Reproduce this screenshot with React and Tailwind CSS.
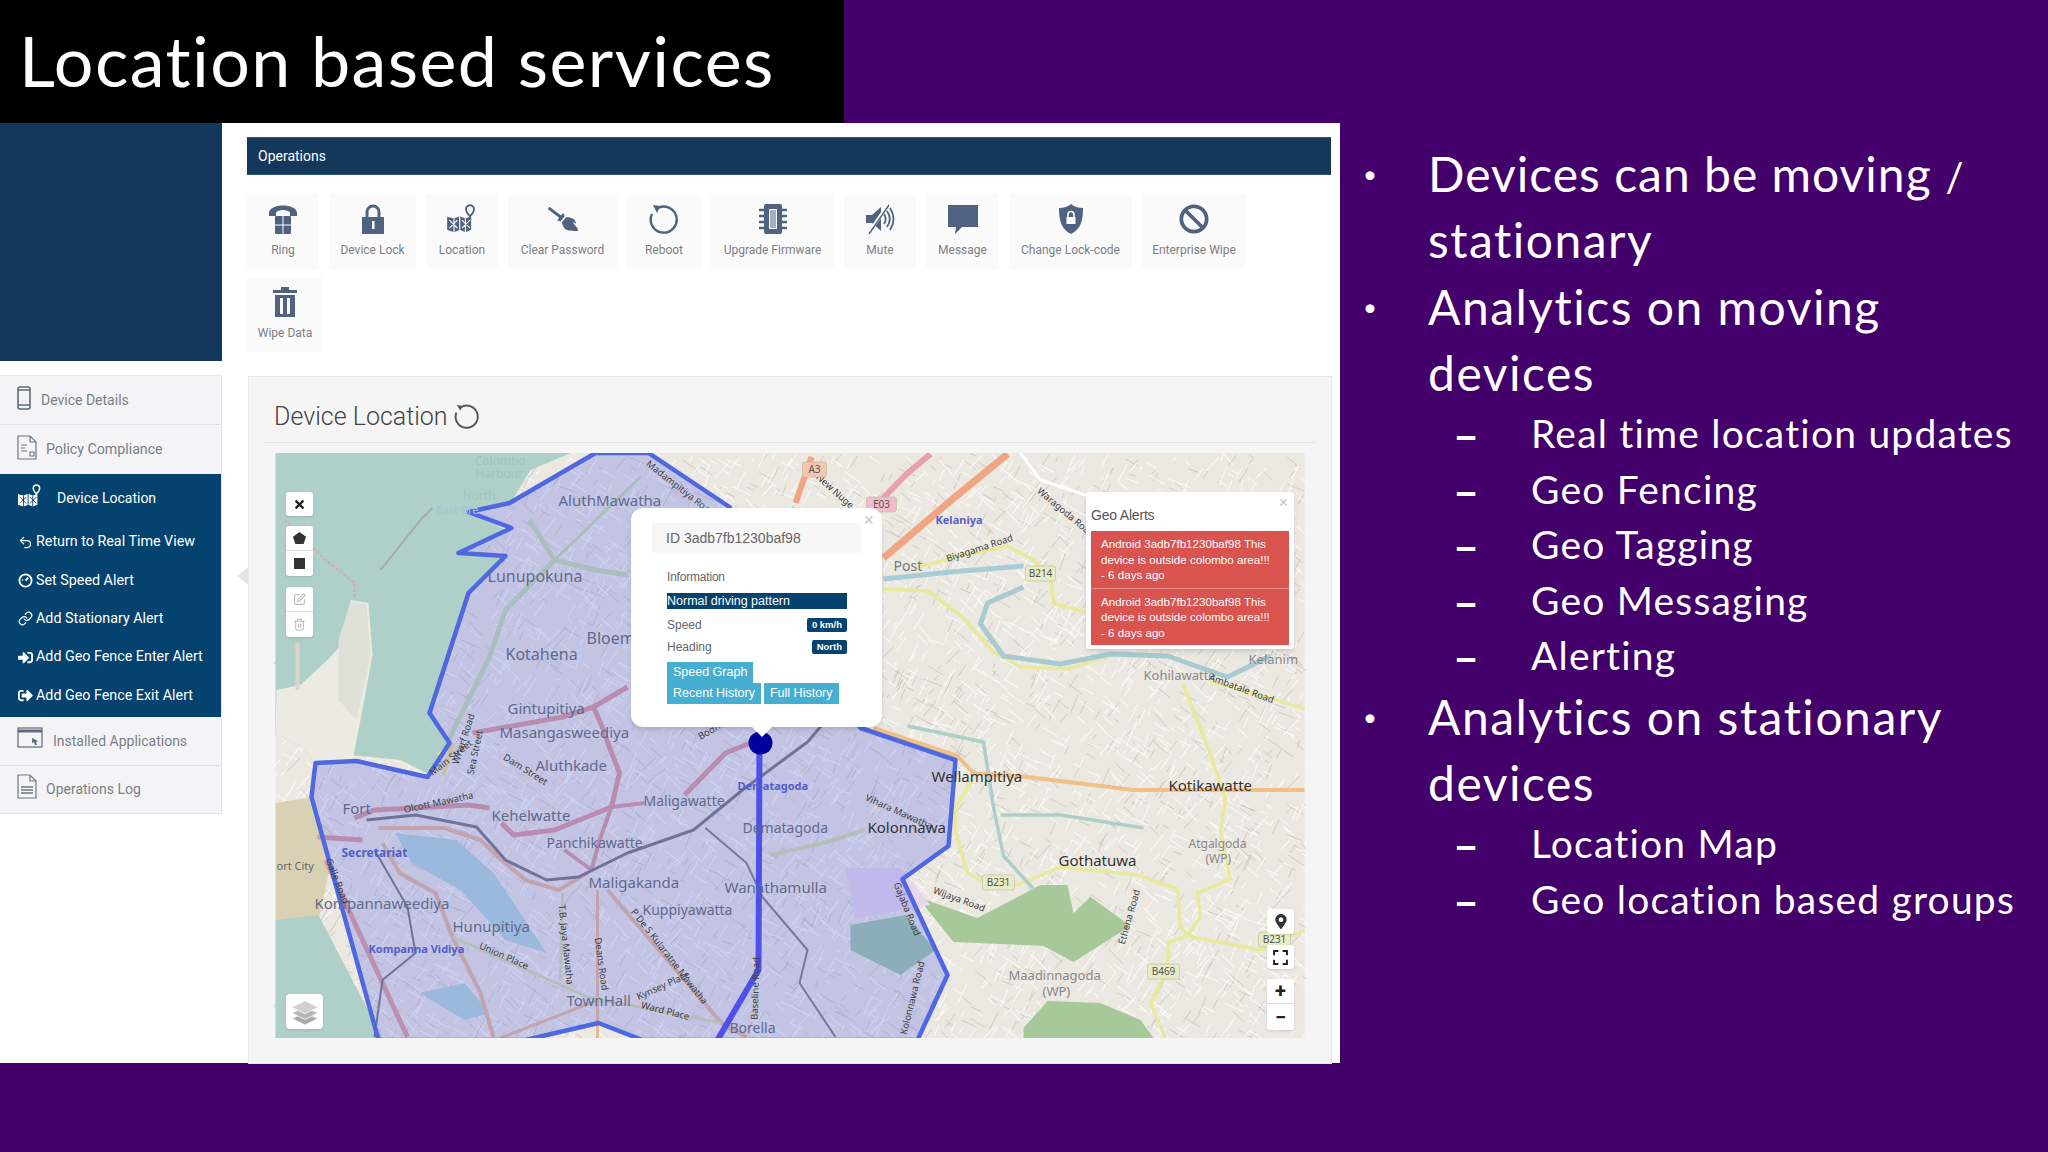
import { Undo2, Link, SquarePen, Trash2 } from "lucide-react";
import { FaBan, FaBroom, FaMapMarkerAlt, FaTimes, FaSignInAlt, FaSignOutAlt } from "react-icons/fa";

const SpeedIcon = ({ className }) => (
   <svg viewBox="0 0 16 16" className={className} fill="none" stroke="currentColor" strokeWidth="2">
      <circle cx="8" cy="8" r="6.500" />
      <path d="M4.500 7.500h1M8 8l3-3" />
   </svg>
);

const MapPin = ({ className, cut = "#fff" }) => (
   <svg viewBox="0 0 28 26" className={className} fill="currentColor">
      <path d="M1 11l6 1.500 5-2 5 2 5-2v12l-5 2-5-2-5 2-6-2z" />
      <path d="M7 12.500v12M12 10.500v12M17 12.500v12M3 14l7 7M10 14l-7 7M14 14l7 7M21 14l-7 7" stroke={cut} strokeWidth="1" fill="none" />
      <path d="M21 1a3.500 3.500 0 013.500 3.500c0 2.500-3.500 6-3.500 6s-3.500-3.500-3.500-6A3.500 3.500 0 0121 1z" fill="none" stroke="currentColor" strokeWidth="1.600" />
   </svg>
);

const opIcons = {
   ring: (
      <svg viewBox="0 0 32 32" className="w-[32px] h-[32px]" fill="currentColor">
         <path d="M2 10C2 0 30 0 30 10v3h-7V9.500C21 6 11 6 9 9.500V13H2z" />
         <rect x="8" y="13" width="16" height="18" rx="1" />
         <path d="M16 13v18M8 22h16" stroke="#fff" strokeWidth="1" />
      </svg>
   ),
   lock: (
      <svg viewBox="0 0 26 32" className="w-[26px] h-[32px]" fill="currentColor">
         <path d="M7 15V9a6 6 0 0112 0v6" fill="none" stroke="currentColor" strokeWidth="3" />
         <rect x="2" y="14" width="22" height="17" />
         <rect x="12" y="18" width="2.500" height="8" fill="#fff" />
      </svg>
   ),
   location: <MapPin className="w-[32px] h-[30px]" />,
   clear: <FaBroom className="w-[30px] h-[30px] -scale-x-100" />,
   reboot: (
      <svg viewBox="0 0 32 32" className="w-[32px] h-[32px]" fill="none" stroke="currentColor" strokeWidth="2.400">
         <path d="M9 5.500A13 13 0 1 1 4 11" />
         <path d="M5 2l7 1-3 7z" fill="currentColor" stroke="none" />
      </svg>
   ),
   chip: (
      <svg viewBox="0 0 32 32" className="w-[32px] h-[32px]" fill="currentColor">
         <path fillRule="evenodd" d="M9 1h14a2 2 0 012 2v26a2 2 0 01-2 2H9a2 2 0 01-2-2V3a2 2 0 012-2zm3 5v20h8V6z" />
         <rect x="13" y="7" width="6" height="18" opacity=".5" />
         <path d="M2 7h5M2 13h5M2 19h5M2 25h5M25 7h5M25 13h5M25 19h5M25 25h5" stroke="currentColor" strokeWidth="2.500" />
      </svg>
   ),
   mute: (
      <svg viewBox="0 0 32 32" className="w-[32px] h-[32px]" fill="currentColor">
         <path d="M2 12h6l9-8v24l-9-8H2z" />
         <path d="M20 11c2 3 2 7 0 10M23 8c3.500 5 3.500 11 0 16M26 5c4.500 7 4.500 15 0 22" fill="none" stroke="currentColor" strokeWidth="1.800" />
         <path d="M24 2L4 31" stroke="#fff" strokeWidth="3.500" />
         <path d="M25 2L5 31" stroke="currentColor" strokeWidth="1.400" />
      </svg>
   ),
   message: (
      <svg viewBox="0 0 32 32" className="w-[32px] h-[32px]" fill="currentColor">
         <path d="M1 2h30v22H15l-7 7 1-7H1z" />
      </svg>
   ),
   shield: (
      <svg viewBox="0 0 28 32" className="w-[28px] h-[32px]" fill="currentColor">
         <path d="M14 1c3 2.500 7 4 12 4 0 12-2 21-12 26C4 26 2 17 2 5c5 0 9-1.500 12-4z" />
         <path d="M11 14v-2.500a3 3 0 016 0V14" fill="none" stroke="#fff" strokeWidth="1.600" />
         <rect x="9.500" y="14" width="9" height="7" fill="#fff" />
      </svg>
   ),
   ban: <FaBan className="w-[30px] h-[30px]" />,
   trash: (
      <svg viewBox="0 0 28 32" className="w-[28px] h-[32px]" fill="currentColor">
         <path d="M10 1h8v3h8v3H2V4h8z" />
         <path fillRule="evenodd" d="M4 9h20v22H4zm5 3v16h3V12zm7 0v16h3V12z" />
      </svg>
   ),
};

const operations = [
   { icon: "ring", label: "Ring", width: "w-[72px]" },
   { icon: "lock", label: "Device Lock", width: "w-[87px]" },
   { icon: "location", label: "Location", width: "w-[72px]" },
   { icon: "clear", label: "Clear Password", width: "w-[109px]" },
   { icon: "reboot", label: "Reboot", width: "w-[74px]" },
   { icon: "chip", label: "Upgrade Firmware", width: "w-[123px]" },
   { icon: "mute", label: "Mute", width: "w-[72px]" },
   { icon: "message", label: "Message", width: "w-[73px]" },
   { icon: "shield", label: "Change Lock-code", width: "w-[123px]" },
   { icon: "ban", label: "Enterprise Wipe", width: "w-[104px]" },
   { icon: "trash", label: "Wipe Data", width: "w-[76px]" },
];

const subMenu = [
   { icon: Undo2, label: "Return to Real Time View" },
   { icon: SpeedIcon, label: "Set Speed Alert" },
   { icon: Link, label: "Add Stationary Alert" },
   { icon: FaSignInAlt, label: "Add Geo Fence Enter Alert" },
   { icon: FaSignOutAlt, label: "Add Geo Fence Exit Alert" },
];

const PhoneIcon = () => (
   <svg viewBox="0 0 14 24" className="w-[14px] h-[24px] mt-[-6px]" fill="none" stroke="#5d6b7c" strokeWidth="1.600">
      <rect x="1" y="1" width="12" height="22" rx="2" />
      <path d="M1 19h12M1 4h12" />
   </svg>
);

const DocIcon = ({ lines }) => (
   <svg viewBox="0 0 20 25" className="w-[20px] h-[25px] mt-[-6px]" fill="none" stroke="#6b7885" strokeWidth="1.200">
      <path d="M1 1h12l6 6v17H1zM13 1v6h6" />
      {lines ? <path d="M4 13h12M4 16h12M4 19h12" strokeWidth="1.600" /> : <path d="M4 10h6M4 13h4M4 16h6M13 17h4v4h-4z" />}
   </svg>
);

const WindowIcon = () => (
   <svg viewBox="0 0 26 21" className="w-[26px] h-[21px] mt-[-8px]" fill="none" stroke="#5d6b7c" strokeWidth="1.200">
      <rect x="1" y="1" width="24" height="19" />
      <path d="M1 4h24" strokeWidth="3" />
      <path d="M15 11l6 3-2 1 1 3-2 0-1-3-2 1z" fill="#5d6b7c" stroke="none" />
   </svg>
);

// minor streets, generated once so the land gets its fine texture
let seed = 7;
const rnd = () => {
   seed = (seed * 16807) % 2147483647;
   return seed / 2147483647;
};
const makeStreets = (count) =>
   Array.from({ length: count }, () => {
      const x = 275 + rnd() * 1029;
      const y = 453 + rnd() * 585;
      const len = 5 + rnd() * 16;
      const angle = (rnd() > 0.5 ? 0.35 : 1.9) + rnd() * 0.5;
      return `M${x.toFixed(1)} ${y.toFixed(1)}L${(x + Math.cos(angle) * len).toFixed(1)} ${(y + Math.sin(angle) * len).toFixed(1)}`;
   }).join("");
const streets = makeStreets(3800);
const alleys = makeStreets(1800);

const roads = [
   // yellow roads
   ["917,567 960,556 1007,546 1033,560 1050,575 1053,603 1087,613", "#e9e99c", 3.5],
   ["883,589 927,591 960,615 993,652 1020,667 1067,669 1120,652", "#e9e99c", 3.5],
   ["1183,685 1210,754 1225,799 1220,832 1230,879 1197,893 1200,917 1187,936 1168,942 1167,971 1150,1003", "#e9e99c", 3.5],
   ["1210,681 1273,699 1304,709", "#e9e99c", 3.5],
   ["973,779 955,807 955,832 967,873 983,881 1017,885 1060,867 1137,875 1177,889 1180,926 1187,936 1260,950 1304,930", "#e9e99c", 3.5],
   ["1167,971 1150,1003 1165,1038", "#e9e99c", 3],
   ["1020,453 1040,480 1085,495 1110,520", "#fff", 3],
   // river
   ["883,579 950,572 1023,566", "#a8cdd6", 5],
   ["1023,587 987,603 980,624 1003,656 1060,664 1110,654 1167,656 1227,677 1270,656", "#a8cbd2", 5],
   ["907,726 983,742 993,807 1003,856 1033,889", "#accfca", 3.5],
   ["1000,815 1060,815 1143,828", "#accfca", 3.5],
   // motorways
   ["883,558 945,505 1007,454", "#f0a583", 7],
   ["880,501 905,475 930,454", "#e8a0b0", 6],
   ["811,457 795,503", "#f0a583", 6],
   ["873,728 957,756 973,773 1027,777 1133,790 1304,790", "#efc187", 4],
   // inner city
   ["354,818 374,810 468,805 489,808", "#dc9a9c", 5],
   ["501,823 513,835 554,830 611,807 619,773 607,742 603,730 593,707 562,717 472,733", "#dc9a9c", 5],
   ["593,707 627,687", "#dc9a9c", 5],
   ["644,803 611,807 599,840 591,870 564,850", "#dc9a9c", 4],
   ["684,795 725,753 750,743", "#dc9a9c", 5],
   ["317,837 362,840", "#dc9a9c", 5],
   ["325,860 407,1037", "#e2a09c", 5],
   ["378,828 444,828 480,840 501,860 525,880 558,890 587,873", "#e8bb96", 4],
   ["382,843 399,873 435,893 452,937 480,993 493,1037", "#e8bb96", 4],
   ["607,890 721,1023 746,1037", "#e8bb96", 4],
   ["597,890 597,1038", "#e8bb96", 3],
   ["500,1038 598,1000 620,1003", "#e8bb96", 3],
   ["562,893 560,980", "#d6e0a8", 3],
   ["452,937 587,997 721,1023", "#d6e0a8", 3],
   ["770,855 823,843 864,830", "#d6e0a8", 4],
   ["529,520 554,560 595,570 627,575", "#c8deac", 5],
   ["554,560 640,477", "#c8deac", 3],
   ["554,560 505,610 489,657 448,740", "#c8deac", 5],
   ["366,820 415,815 476,827 505,860 546,880 578,877 627,853 693,830 742,790 807,742 860,680", "#787878", 3],
   ["374,850 407,907 415,953 382,980 374,1037", "#787878", 2],
   ["705,828 746,863 762,897 807,950 799,983 835,1037", "#808080", 2],
   ["438,755 452,745 443,775", "#f6e27a", 4],
];

const labels = [
   ["Colombo", 474, 465, 12, "#a2c6c4"],
   ["Harbour", 475, 478, 12, "#a2c6c4"],
   ["North", 462, 500, 12, "#a2c6c4"],
   ["East Bre", 436, 514, 11, "#a2c6d0"],
   ["AluthMawatha", 558, 506, 15, "#5f6a8c"],
   ["Lunupokuna", 487, 582, 16, "#5f6a8c"],
   ["Bloem", 586, 644, 16, "#5f6a8c"],
   ["Kotahena", 505, 660, 16, "#5f6a8c"],
   ["Gintupitiya", 507, 714, 15, "#5f6a8c"],
   ["Masangasweediya", 499, 738, 15, "#5f6a8c"],
   ["Aluthkade", 535, 771, 15, "#5f6a8c"],
   ["Fort", 342, 814, 15, "#5f6a8c"],
   ["Kehelwatte", 491, 821, 15, "#5f6a8c"],
   ["Maligawatte", 643, 806, 14, "#5f6a8c"],
   ["Dematagoda", 737, 790, 11, "#4f60c8", 700],
   ["Dematagoda", 742, 833, 14, "#5f6a8c"],
   ["Panchikawatte", 546, 848, 14, "#5f6a8c"],
   ["Secretariat", 341, 857, 12, "#4f60c8", 700],
   ["Maligakanda", 588, 888, 15, "#5f6a8c"],
   ["Wanathamulla", 724, 893, 15, "#5f6a8c"],
   ["Kuppiyawatta", 642, 915, 14, "#5f6a8c"],
   ["Kompannaweediya", 314, 909, 15, "#5f6a8c"],
   ["Hunupitiya", 452, 932, 15, "#5f6a8c"],
   ["Kompanna Vidiya", 368, 953, 11, "#4f60c8", 700],
   ["TownHall", 566, 1006, 15, "#5f6a8c"],
   ["Borella", 729, 1033, 14, "#5f6a8c"],
   ["ort City", 276, 870, 11, "#5f6a6c"],
   ["Wellampitiya", 931, 782, 15, "#333"],
   ["Kotikawatte", 1168, 791, 15, "#333"],
   ["Kolonnawa", 867, 833, 15, "#333"],
   ["Gothatuwa", 1058, 866, 15, "#333"],
   ["Atgalgoda", 1188, 848, 12, "#888"],
   ["(WP)", 1205, 863, 12, "#888"],
   ["Maadinnagoda", 1008, 980, 13, "#888"],
   ["(WP)", 1042, 996, 13, "#888"],
   ["Kelaniya", 935, 524, 11, "#5a5fc0", 700],
   ["Post", 893, 571, 14, "#777"],
   ["Kohilawatte", 1143, 680, 13, "#888"],
   ["Kelanim", 1248, 664, 13, "#888"],
];

const roadNames = [
   ["Wharf Road", 458, 765, -72],
   ["Sea Street", 473, 775, -78],
   ["Madampitiya Road", 645, 465, 38],
   ["New Nuge", 815, 478, 42],
   ["Waragoda Road", 1036, 492, 40],
   ["Biyagama Road", 947, 562, -18],
   ["Wijaya Road", 932, 893, 20],
   ["Ambatale Road", 1208, 680, 20],
   ["Gajaba Road", 893, 884, 68],
   ["Kolonnawa Road", 906, 1035, -76],
   ["Baseline Road", 757, 1020, -88],
   ["Union Place", 478, 948, 24],
   ["Deans Road", 594, 938, 82],
   ["T.B. Jaya Mawatha", 558, 905, 84],
   ["P De S Kularatne Mawatha", 630, 912, 52],
   ["Kynsey Place", 638, 1000, -24],
   ["Ward Place", 640, 1008, 14],
   ["Galle Road", 325, 860, 68],
   ["Olcott Mawatha", 404, 813, -12],
   ["Dam Street", 502, 759, 32],
   ["Main Street", 432, 776, -38],
   ["Vihara Mawatha", 864, 800, 24],
   ["Ethena Road", 1124, 945, -74],
   ["Bodhiraja", 700, 740, -30],
];

const shields = [
   ["A3", 802, 462, 24, "#f3c6ad"],
   ["E03", 866, 497, 30, "#f3bccb"],
   ["B214", 1025, 566, 30, "#e6ecc3"],
   ["B231", 982, 875, 32, "#e6ecc3"],
   ["B469", 1147, 964, 32, "#e6ecc3"],
   ["B231", 1258, 932, 32, "#e6ecc3"],
];

const MapDrawing = () => (
   <svg viewBox="275 453 1029 585" className="block w-full h-full" style={{ fontFamily: "'Noto Sans', sans-serif" }}>
      <rect x="275" y="453" width="1029" height="585" fill="#ebe7e1" />
      <path d={alleys} stroke="#c6c1b8" strokeWidth="0.700" fill="none" />
      <path d={streets} stroke="#f9f8f5" strokeWidth="1.100" fill="none" />

      {/* green and water areas */}
      <polygon points="917,897 977,918 1040,885 1067,885 1073,913 1090,897 1130,926 1073,962 1043,946 953,942" fill="#a7c899" />
      <polygon points="1023,1028 1047,1001 1100,1003 1140,1020 1153,1038 1023,1038" fill="#a7c899" />
      <polygon points="395,833 456,840 493,873 529,927 546,953 505,940 460,890 411,863" fill="#b4d6d8" />
      <polygon points="419,993 464,983 489,1013 464,1020" fill="#b4d6d8" />
      <polygon points="845,868 900,868 930,905 855,918" fill="#e8d6ec" />
      <polygon points="850,925 905,915 935,950 900,975 850,950" fill="#a0c8a8" />

      {/* sea and port */}
      <polygon points="275,453 570,453 530,470 510,503 470,512 505,530 460,553 505,557 468,593 429,713 449,745 430,775 400,760 350,755 315,763 300,745 275,735" fill="#afd0c8" />
      <polygon points="276,690 300,685 327,660 345,640 350,600 368,603 372,655 360,720 352,760 315,763 300,745 275,735" fill="#ecebe3" />
      <polygon points="338,640 350,602 366,604 370,655 356,720 338,700" fill="#dfe0d8" />
      <polygon points="275,803 311,797 330,865 318,920 275,920" fill="#d9d1b4" />
      <polygon points="275,920 318,915 382,1038 275,1038" fill="#afd0c8" />
      <polyline points="284,520 325,560 354,583 354,597" fill="none" stroke="#dba6b4" strokeWidth="2" strokeDasharray="3 2" />
      <polyline points="380,570 420,520 432,508" fill="none" stroke="#aaa" strokeWidth="2" />
      <polyline points="297,643 297,690" fill="none" stroke="#d9d4ca" strokeWidth="4" />

      {roads.map(([points, color, width], i) => (
         <polyline key={i} points={points} fill="none" stroke={color} strokeWidth={width} strokeLinejoin="round" />
      ))}

      {/* geo fence */}
      <polygon
         points="595,453 509,503 468,512 511,528 458,553 505,556 468,593 429,713 449,743 427,777 356,761 315,763 311,797 378,1040 525,1040 598,1023 642,1040 917,1040 947,975 902,879 948,846 955,760 860,728 800,640 729,507 648,453"
         fill="#5a66ee"
         fillOpacity="0.27"
         stroke="#4f68e2"
         strokeWidth="4.500"
         strokeLinejoin="round"
      />
      <polyline points="759,745 758,970 717,1040" fill="none" stroke="#4e50ea" strokeWidth="6" />
      <ellipse cx="760" cy="743" rx="12" ry="11.500" fill="#00009c" />

      {labels.map(([text, x, y, size, color, weight], i) => (
         <text key={i} x={x} y={y} fontSize={size} fill={color} fontWeight={weight || 400}>{text}</text>
      ))}
      {roadNames.map(([text, x, y, angle], i) => (
         <text key={i} x={x} y={y} fontSize="9.500" fill="#3e3e3e" transform={`rotate(${angle} ${x} ${y})`}>{text}</text>
      ))}
      {shields.map(([text, x, y, w, color], i) => (
         <g key={i}>
            <rect x={x} y={y} width={w} height="15" rx="2" fill={color} stroke="#b9bb9a" strokeWidth="0.600" />
            <text x={x + w / 2} y={y + 11} fontSize="10" fill="#555" textAnchor="middle">{text}</text>
         </g>
      ))}
   </svg>
);

const Ctl = ({ className = "", children }) => (
   <div className={`w-[27px] flex items-center justify-center ${className}`}>{children}</div>
);

const Bullet = ({ children }) => (
   <div className="flex text-[48px] leading-[66.300px] tracking-[1.500px]">
      <span className="w-[88px] pl-[23px] text-[24px]">•</span>
      <span className="w-[560px]">{children}</span>
   </div>
);

const Sub = ({ children }) => (
   <div className="flex h-[55.500px] text-[39px] leading-[55.500px] tracking-[1.200px]">
      <span className="w-[191px] pl-[113px] pt-[2px] text-[45px] font-bold">–</span>
      <span className="whitespace-nowrap">{children}</span>
   </div>
);

const App = () => {
   return (
      <div className="w-[2048px] h-[1152px] flex bg-[#44006a] overflow-hidden">
         {/* Slide left: title and screenshot */}
         <div className="w-[1340px] shrink-0 flex flex-col">
            <div className="w-[844px] h-[123px] bg-black flex items-center pl-[19px] pb-[4px]">
               <h1 className="font-['Lato',sans-serif] text-[70px] leading-none text-white tracking-[1.400px]">Location based services</h1>
            </div>

            <div className="h-[940px] bg-white flex font-['Roboto',sans-serif]">
               {/* Sidebar */}
               <aside className="w-[222px] shrink-0">
                  <div className="h-[238px] bg-[#14375c]" />
                  <div className="mt-[14px] border-y border-r border-[#e6e6e8] bg-[#f4f4f6] text-[14px] text-[#7b7f85]">
                     <div className="h-[49px] pt-[1px] flex items-center pl-[17px] gap-[10px] border-b border-[#e2e2e4]">
                        <PhoneIcon /><span>Device Details</span>
                     </div>
                     <div className="h-[49px] pt-[1px] flex items-center pl-[17px] gap-[9px]">
                        <DocIcon /><span className="text-[14.200px]">Policy Compliance</span>
                     </div>
                     <div className="h-[243px] bg-[#04426f] text-white flex flex-col">
                        <div className="h-[49px] flex items-center pl-[17px] gap-[14px]">
                           <MapPin className="w-[26px] h-[24px] mt-[-6px]" cut="#04426f" /><span>Device Location</span>
                        </div>
                        {subMenu.map(({ icon: Icon, label }) => (
                           <div key={label} className="h-[38.500px] flex items-center pl-[18px] gap-[3px] mt-[-0.200px]">
                              <Icon className="w-[15px] h-[15px]" /><span className="text-[14.300px]">{label}</span>
                           </div>
                        ))}
                     </div>
                     <div className="h-[49px] flex items-center pl-[17px] gap-[10px] border-b border-[#e2e2e4]">
                        <WindowIcon /><span>Installed Applications</span>
                     </div>
                     <div className="h-[47px] flex items-center pl-[17px] gap-[9px]">
                        <DocIcon lines /><span>Operations Log</span>
                     </div>
                  </div>
               </aside>

               {/* Content */}
               <main className="flex-1 pl-[25px] pr-[8px] pt-[14px] relative">
                  <div className="mr-[1px] h-[38px] bg-[#14375c] border-y border-[#2d5478] text-white text-[14px] flex items-center pl-[11px]">Operations</div>

                  <div className="h-[201px] pt-[19px] pr-[60px] flex flex-wrap content-start gap-x-[10px] gap-y-[8px]">
                     {operations.map(({ icon, label, width }) => (
                        <div key={label} className={`${width} h-[75px] pt-[8px] bg-[#fafafb] flex flex-col items-center text-[12px] text-[#7a7f86]`}>
                           <div className="h-[33px] flex items-center text-[#4f6380]">{opIcons[icon]}</div>
                           <span className="mt-[6px] whitespace-nowrap">{label}</span>
                        </div>
                     ))}
                  </div>

                  <div className="ml-[1px] h-[688px] bg-[#f5f5f6] border border-[#e8e8ea] px-[16px] relative">
                     {/* collapse handle of the sidebar */}
                     <div className="absolute left-[-12px] top-[190px] w-0 h-0 border-y-[9px] border-y-transparent border-r-[11px] border-r-[#e4e6ea]" />

                     <div className="h-[66px] border-b border-[#e4e4e6] flex items-center pl-[9px] pt-[14px] gap-[5px]">
                        <span className="text-[25px] font-light text-[#444]">Device Location</span>
                        <svg viewBox="0 0 28 28" className="w-[27px] h-[27px]" fill="none" stroke="#555" strokeWidth="2">
                           <path d="M8 4.500A11.500 11.500 0 1 1 3.500 10" />
                           <path d="M4 2l6 1-2.500 5z" fill="#555" stroke="none" />
                        </svg>
                     </div>

                     {/* Map with its overlays */}
                     <div className="relative h-[585px] mt-[10px] mx-[9px] overflow-hidden">
                        <MapDrawing />

                        <div className="absolute left-[12px] top-[39px] w-[27px] h-[24px] bg-white rounded-[3px] shadow flex items-center justify-center text-[#222]"><FaTimes className="w-[13px] h-[13px]" /></div>
                        <div className="absolute left-[12px] top-[73px] bg-white rounded-[3px] shadow divide-y divide-[#ddd]">
                           <Ctl className="h-[25px]"><svg viewBox="0 0 14 14" className="w-[13px] h-[13px]"><path d="M7 0l7 5-2.500 8h-9L0 5z" fill="#333" /></svg></Ctl>
                           <Ctl className="h-[25px]"><div className="w-[11px] h-[11px] bg-[#333]" /></Ctl>
                        </div>
                        <div className="absolute left-[12px] top-[134px] bg-white rounded-[3px] shadow divide-y divide-[#ddd] text-[#bbb]">
                           <Ctl className="h-[25px]"><SquarePen className="w-[13px] h-[13px]" /></Ctl>
                           <Ctl className="h-[25px]"><Trash2 className="w-[13px] h-[13px]" /></Ctl>
                        </div>
                        <div className="absolute left-[12px] top-[541px] w-[37px] h-[35px] bg-white rounded-[4px] shadow flex items-center justify-center">
                           <svg viewBox="0 0 30 28" className="w-[28px] h-[26px]" stroke="#f3f3f3" strokeWidth="1">
                              <path d="M15 15l14 6-14 7-14-7z" fill="#aaa" />
                              <path d="M15 9l14 6-14 7-14-7z" fill="#b5b5b5" />
                              <path d="M15 2l14 7-14 7L1 9z" fill="#d0d0d0" />
                           </svg>
                        </div>

                        <div className="absolute left-[993px] top-[456px] w-[27px] h-[25px] bg-white rounded-[3px] shadow flex items-center justify-center text-[#333]"><FaMapMarkerAlt className="w-[14px] h-[15px]" /></div>
                        <div className="absolute left-[993px] top-[492px] w-[27px] h-[24px] bg-white rounded-[3px] shadow flex items-center justify-center">
                           <svg viewBox="0 0 14 14" className="w-[15px] h-[15px]" fill="none" stroke="#222" strokeWidth="1.800"><path d="M1 5V1h4M9 1h4v4M13 9v4H9M5 13H1V9" /></svg>
                        </div>
                        <div className="absolute left-[993px] top-[526px] w-[27px] bg-white rounded-[3px] shadow divide-y divide-[#ddd] text-[#222] text-[20px] font-bold leading-none">
                           <Ctl className="h-[25px]">+</Ctl>
                           <Ctl className="h-[26px]">−</Ctl>
                        </div>

                        {/* Device popup */}
                        <div className="absolute left-[357px] top-[55px] w-[251px] h-[219px] bg-white rounded-[12px] shadow-md pl-[21px] pr-[21px] pt-[15px] font-['Liberation_Sans',sans-serif] text-[#666]">
                           <span className="absolute right-[8px] top-[3px] text-[18px] leading-none text-[#c4c4c4]">×</span>
                           <div className="h-[30px] bg-[#f7f7f7] flex items-center pl-[14px] text-[14px] text-[#666]">ID 3adb7fb1230baf98</div>
                           <div className="pl-[15px] pr-[14px]">
                              <div className="mt-[17px] text-[12px] leading-[14px] tracking-[-0.200px]">Information</div>
                              <div className="mt-[9px] h-[16px] bg-[#04426f] text-white text-[12.500px] leading-[16px] w-[180px]">Normal driving pattern</div>
                              <div className="mt-[9px] h-[14px] w-[180px] flex items-center justify-between text-[12px]">
                                 <span>Speed</span>
                                 <span className="h-[14px] px-[5px] bg-[#04426f] rounded-[2px] text-white text-[9.500px] font-bold leading-[14px]">0 km/h</span>
                              </div>
                              <div className="mt-[8px] h-[14px] w-[180px] flex items-center justify-between text-[12px]">
                                 <span>Heading</span>
                                 <span className="h-[14px] px-[5px] bg-[#04426f] rounded-[2px] text-white text-[9.500px] font-bold leading-[14px]">North</span>
                              </div>
                              <div className="mt-[8px] w-[180px] flex flex-wrap text-white text-[12.500px] leading-[21px]">
                                 <span className="bg-[#46aed0] px-[6px] whitespace-nowrap">Speed Graph</span>
                                 <div className="basis-full" />
                                 <span className="bg-[#46aed0] px-[6px] whitespace-nowrap">Recent History</span>
                                 <span className="bg-[#46aed0] px-[6px] ml-[3px] whitespace-nowrap">Full History</span>
                              </div>
                           </div>
                           <div className="absolute left-[124px] bottom-[-7px] w-[14px] h-[14px] bg-white rotate-45" />
                        </div>

                        {/* Geo alerts popup */}
                        <div className="absolute left-[812px] top-[39px] w-[208px] h-[157px] bg-white rounded-[3px] shadow-md px-[5px] font-['Liberation_Sans',sans-serif]">
                           <span className="absolute right-[6px] top-[3px] text-[16px] leading-none text-[#c4c4c4]">×</span>
                           <div className="h-[39px] pt-[13px] text-[14px] text-[#555] tracking-[-0.200px]">Geo Alerts</div>
                           <div className="bg-[#d9534f] text-white text-[11.600px] leading-[15.500px] divide-y divide-[#e48d8a]">
                              <div className="px-[10px] py-[5px]">Android 3adb7fb1230baf98 This device is outside colombo area!!!<br />- 6 days ago</div>
                              <div className="px-[10px] py-[5px]">Android 3adb7fb1230baf98 This device is outside colombo area!!!<br />- 6 days ago</div>
                           </div>
                        </div>
                     </div>
                  </div>
               </main>
            </div>
         </div>

         {/* Slide right: bullet list */}
         <div className="flex-1 pt-[141px] font-['Lato',sans-serif] text-white">
            <Bullet><span className="tracking-[1px]">Devices can be moving</span> <span className="text-[40px] leading-none">/</span> stationary</Bullet>
            <Bullet>Analytics on moving devices</Bullet>
            <Sub>Real time location updates</Sub>
            <Sub>Geo Fencing</Sub>
            <Sub>Geo Tagging</Sub>
            <Sub>Geo Messaging</Sub>
            <Sub>Alerting</Sub>
            <Bullet>Analytics on stationary devices</Bullet>
            <Sub>Location Map</Sub>
            <Sub>Geo location based groups</Sub>
         </div>
      </div>
   );
};

export default App;
